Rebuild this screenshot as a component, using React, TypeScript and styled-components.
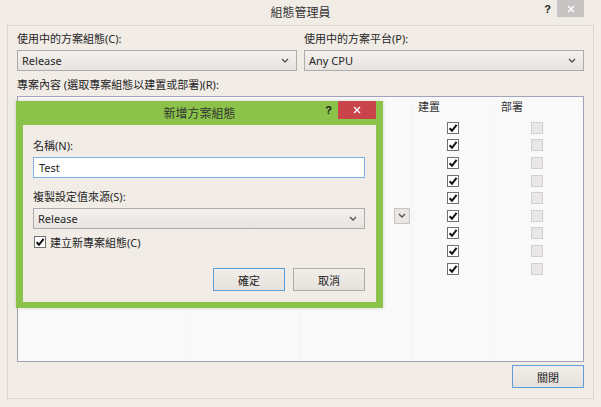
import React from "react"
import styled, { createGlobalStyle } from "styled-components"

const GlobalStyle = createGlobalStyle`
  body {
    margin: 0;
    background: #f1ece6;
    font-family: "Noto Sans", "Noto Sans CJK TC", sans-serif;
    font-size: 11px;
    color: #262626;
  }
`

const Chevron = () => (
  <svg width="8" height="5" viewBox="0 0 8 5">
    <path d="M1 1 L4 4 L7 1" fill="none" stroke="#505050" strokeWidth="1.3" />
  </svg>
)

const Tick = () => (
  <svg width="10" height="10" viewBox="0 0 10 10">
    <path d="M1.6 5.2 L4 7.8 L8.6 1.8" fill="none" stroke="#111" strokeWidth="2" />
  </svg>
)

const CloseGlyph = () => (
  <svg width="8" height="8" viewBox="0 0 8 8">
    <path d="M1 1 L7 7 M7 1 L1 7" stroke="#fff" strokeWidth="1.4" />
  </svg>
)

const rows = [0, 1, 2, 3, 4, 5, 6, 7, 8]

const App = () => {
  return (
    <>
      <GlobalStyle />
      <Window>
        <TitleBar>
          <span />
          <Title>組態管理員</Title>
          <Controls>
            <Help>?</Help>
            <CloseButton $color="#c7c3c2">
              <CloseGlyph />
            </CloseButton>
          </Controls>
        </TitleBar>
        <Frame>
          <TwoCols>
            <Field>
              <Label>使用中的方案組態(C):</Label>
              <Select>
                <span>Release</span>
                <Chevron />
              </Select>
            </Field>
            <Field>
              <Label>使用中的方案平台(P):</Label>
              <Select>
                <span>Any CPU</span>
                <Chevron />
              </Select>
            </Field>
          </TwoCols>
          <Label $top={7}>專案內容 (選取專案組態以建置或部署)(R):</Label>
          <GridBox>
            <HeadCell />
            <HeadCell />
            <HeadCell />
            <HeadCell>建置</HeadCell>
            <HeadCell>部署</HeadCell>
            {rows.map((r) => (
              <React.Fragment key={r}>
                <Cell />
                <Cell />
                <Cell $end>
                  {r === 5 && (
                    <MiniDrop>
                      <Chevron />
                    </MiniDrop>
                  )}
                </Cell>
                <Cell $center>
                  <Box>
                    <Tick />
                  </Box>
                </Cell>
                <Cell $center $shift>
                  <Box $disabled />
                </Cell>
              </React.Fragment>
            ))}
            <Filler />
            <Filler />
            <Filler />
            <Filler />
            <Filler />
          </GridBox>
          <ButtonRow>
            <Button $focused>關閉</Button>
          </ButtonRow>
        </Frame>

        <Dialog>
          <DialogTitle>
            <span />
            <Title>新增方案組態</Title>
            <Controls>
              <Help>?</Help>
              <CloseButton $color="#c8434a" $wide>
                <CloseGlyph />
              </CloseButton>
            </Controls>
          </DialogTitle>
          <DialogBody>
            <Label>名稱(N):</Label>
            <Input>Test</Input>
            <Label $top={12}>複製設定值來源(S):</Label>
            <Select>
              <span>Release</span>
              <Chevron />
            </Select>
            <CheckRow>
              <Box>
                <Tick />
              </Box>
              <span>建立新專案組態(C)</span>
            </CheckRow>
            <ButtonRow $top={19}>
              <Button $focused>確定</Button>
              <Button>取消</Button>
            </ButtonRow>
          </DialogBody>
        </Dialog>
      </Window>
    </>
  )
}

export default App

const Window = styled.div`
  position: relative;
  width: 601px;
  height: 407px;
  display: flex;
  flex-direction: column;
  box-sizing: border-box;
  padding-bottom: 8px;
`

const TitleBar = styled.div`
  height: 25px;
  display: grid;
  grid-template-columns: 1fr auto 1fr;
  align-items: start;
`

const Title = styled.div`
  font-size: 12px;
  line-height: 25px;
  color: #333;
`

const Controls = styled.div`
  justify-self: end;
  display: flex;
  align-items: flex-start;
  gap: 6px;
`

const Help = styled.span`
  font-family: "Liberation Sans", sans-serif;
  font-weight: bold;
  font-size: 11px;
  line-height: 19px;
  color: #222;
`

const CloseButton = styled.div<{ $color: string; $wide?: boolean }>`
  width: ${(p) => (p.$wide ? 38 : 27)}px;
  height: ${(p) => (p.$wide ? 18 : 17)}px;
  margin-right: ${(p) => (p.$wide ? 0 : 17)}px;
  background: ${(p) => p.$color};
  display: flex;
  align-items: center;
  justify-content: center;
`

const Frame = styled.div`
  flex: 1;
  margin: 0 7px;
  border: 1px solid #dcd5ce;
  padding: 6px 9px 0;
  display: flex;
  flex-direction: column;
`

const TwoCols = styled.div`
  display: grid;
  grid-template-columns: 1fr 1fr;
  gap: 7px;
`

const Field = styled.div`
  display: flex;
  flex-direction: column;
`

const Label = styled.div<{ $top?: number }>`
  margin-top: ${(p) => p.$top ?? 0}px;
  line-height: 14px;
  height: 14px;
  white-space: nowrap;
`

const Select = styled.div`
  margin-top: 4px;
  height: 21px;
  box-sizing: border-box;
  border: 1px solid #acacac;
  background: linear-gradient(#f3f0ed, #e8e4e0);
  display: flex;
  align-items: center;
  justify-content: space-between;
  padding: 0 7px 0 4px;
`

const GridBox = styled.div`
  margin-top: 4px;
  height: 266px;
  box-sizing: border-box;
  border: 1px solid #a3a2b8;
  background: #f9f9f9;
  display: grid;
  grid-template-columns: 169px 113px 112px 83px 1fr;
  grid-template-rows: 22px repeat(9, 17.6px) 1fr;
`

const HeadCell = styled.div`
  padding-left: 6px;
  line-height: 20px;
  color: #333;
  border-right: 1px solid #f5f5f5;
  &:last-of-type {
    border-right: none;
  }
`

const Cell = styled.div<{ $center?: boolean; $end?: boolean; $shift?: boolean }>`
  display: flex;
  align-items: center;
  justify-content: ${(p) => (p.$center ? "center" : p.$end ? "flex-end" : "flex-start")};
  padding-right: ${(p) => (p.$shift ? 4 : p.$end ? 1 : 0)}px;
  border-right: ${(p) => (p.$shift ? "none" : "1px solid #f5f5f5")};
`

const Filler = styled.div`
  border-right: 1px solid #f5f5f5;
  &:last-child {
    border-right: none;
  }
`

const MiniDrop = styled.div`
  width: 16px;
  height: 16px;
  box-sizing: border-box;
  border: 1px solid #c9c4c4;
  background: #ebe6e4;
  display: flex;
  align-items: center;
  justify-content: center;
`

const Box = styled.div<{ $disabled?: boolean }>`
  width: 12px;
  height: 12px;
  box-sizing: border-box;
  border: 1px solid ${(p) => (p.$disabled ? "#d4d0d0" : "#707070")};
  background: ${(p) => (p.$disabled ? "#e9e7e7" : "#fff")};
  display: flex;
  align-items: center;
  justify-content: center;
`

const ButtonRow = styled.div<{ $top?: number }>`
  margin-top: ${(p) => p.$top ?? 3}px;
  display: flex;
  justify-content: flex-end;
  gap: 8px;
`

const Button = styled.div<{ $focused?: boolean }>`
  width: 72px;
  height: 23px;
  box-sizing: border-box;
  border: 1px solid ${(p) => (p.$focused ? "#5c9fd8" : "#acacac")};
  background: linear-gradient(#f1ede9, #e6e1dc);
  display: flex;
  align-items: center;
  justify-content: center;
  color: #222;
`

const Dialog = styled.div`
  position: absolute;
  left: 16px;
  top: 101px;
  width: 367px;
  height: 207px;
  box-sizing: border-box;
  background: #8bc34a;
  padding: 0 7px 6px;
  display: flex;
  flex-direction: column;
  box-shadow: 0 0 4px rgba(0, 0, 0, 0.15);
`

const DialogTitle = styled.div`
  height: 24px;
  display: grid;
  grid-template-columns: 1fr auto 1fr;
  align-items: start;
`

const DialogBody = styled.div`
  flex: 1;
  background: #f1ece6;
  padding: 14px 11px 0 10px;
  display: flex;
  flex-direction: column;
`

const Input = styled.div`
  margin-top: 4px;
  height: 21px;
  box-sizing: border-box;
  border: 1px solid #7fb3e6;
  background: #fff;
  padding: 0 5px;
  display: flex;
  align-items: center;
`

const CheckRow = styled.div`
  margin-top: 6px;
  height: 14px;
  display: flex;
  align-items: center;
  gap: 4px;
  padding-left: 1px;
`
